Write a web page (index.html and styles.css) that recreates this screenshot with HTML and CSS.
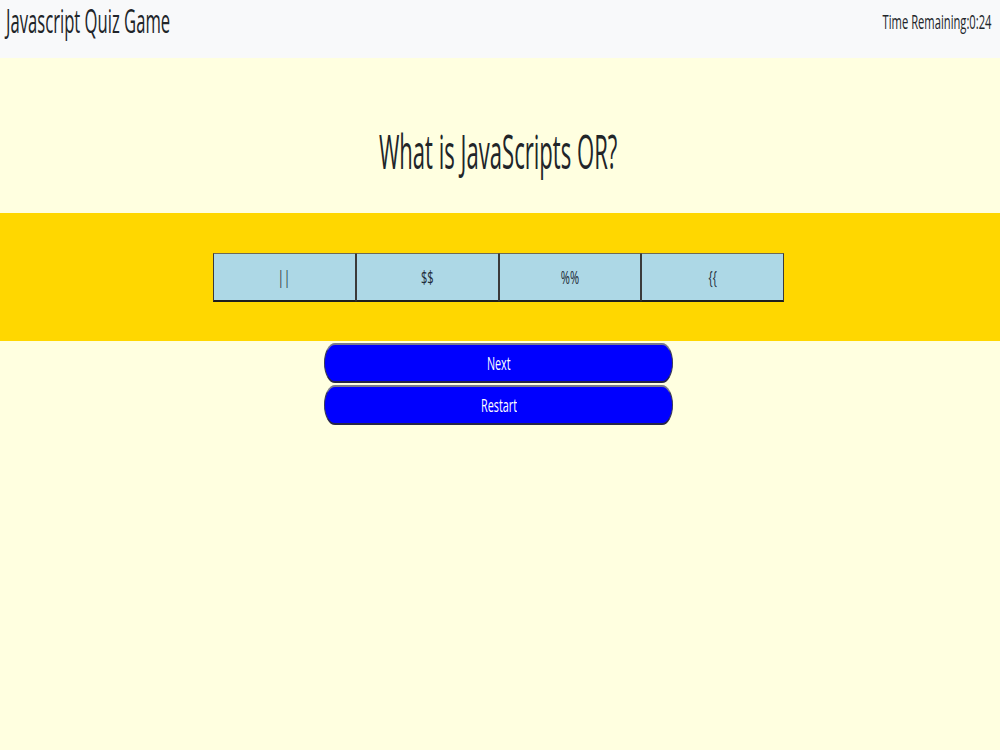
FILE: index.html
```html
<!DOCTYPE html>
<html lang="en">
<head>
<meta charset="utf-8">
<title>Javascript Quiz Game</title>
<link rel="stylesheet" href="styles.css">
</head>
<body>
  <header class="topbar">
    <h1 class="brand"><span class="squish squish-left">Javascript Quiz Game</span></h1>
    <div class="timer"><span class="squish squish-right">Time Remaining:0:24</span></div>
  </header>
  <main class="quiz">
    <section class="question-area">
      <h2 class="question"><span class="squish">What is JavaScripts OR?</span></h2>
    </section>
    <section class="answers-band">
      <div class="answers">
        <button class="answer"><span class="squish">||</span></button>
        <button class="answer"><span class="squish">$$</span></button>
        <button class="answer"><span class="squish">%%</span></button>
        <button class="answer"><span class="squish">{{</span></button>
      </div>
    </section>
    <div class="controls">
      <button class="control"><span class="squish">Next</span></button>
      <button class="control"><span class="squish">Restart</span></button>
    </div>
  </main>
</body>
</html>
```
FILE: styles.css
```css
* { box-sizing: border-box; }

html, body {
  margin: 0;
  padding: 0;
}

body {
  background: #ffffe0;
  font-family: "Open Sans", "Noto Sans", sans-serif;
  color: #212529;
  width: 1000px;
  height: 750px;
  overflow: hidden;
}

.squish {
  display: inline-block;
  white-space: nowrap;
  transform: scaleX(0.52);
  transform-origin: center;
}
.squish-left { transform-origin: left center; }
.squish-right { transform-origin: right center; }

.topbar {
  height: 58px;
  background: #f8f9fa;
  display: flex;
  justify-content: space-between;
  align-items: flex-start;
  padding: 2px 8px 0 6px;
}

.brand {
  margin: 0;
  font-size: 32px;
  font-weight: 400;
  line-height: 38px;
}

.timer {
  margin-top: 8px;
  font-size: 20px;
  line-height: 24px;
}
.timer .squish { transform: scaleX(0.56); }

.quiz {
  width: 997px;
}

.question-area {
  height: 155px;
  padding-top: 64px;
  text-align: center;
}

.question {
  margin: 0;
  font-size: 48px;
  font-weight: 400;
  line-height: 58px;
}
.question .squish { transform: scaleX(0.46); }

.answers-band {
  background: #ffd700;
  width: 1000px;
  height: 128px;
  padding: 40px 3px 0 0;
  display: flex;
  justify-content: center;
}

.answers {
  width: 571px;
  height: 49px;
  display: grid;
  grid-template-columns: repeat(4, 1fr);
}

.answer {
  margin: 0;
  padding: 0;
  background: #add8e6;
  border-style: solid;
  border-width: 1px 1px 2px 1px;
  border-color: #6e6a55 #3a3a3a #1e1e1e #3a3a3a;
  font-family: inherit;
  font-size: 18px;
  color: #1f2d3a;
}
.answer .squish { transform: scaleX(0.615); }

.controls {
  display: flex;
  flex-direction: column;
  align-items: center;
  gap: 2px;
  padding-top: 2px;
}

.control {
  width: 349px;
  height: 40px;
  margin: 0;
  padding: 0;
  background: #0000ff;
  color: #ffffff;
  border-style: solid;
  border-width: 2px 1px 2px 1px;
  border-color: #7a7a8a #3a3a55 #26264a #3a3a55;
  border-radius: 11px / 20px;
  font-family: inherit;
  font-size: 18px;
}
.control .squish { transform: scaleX(0.6); }
```
